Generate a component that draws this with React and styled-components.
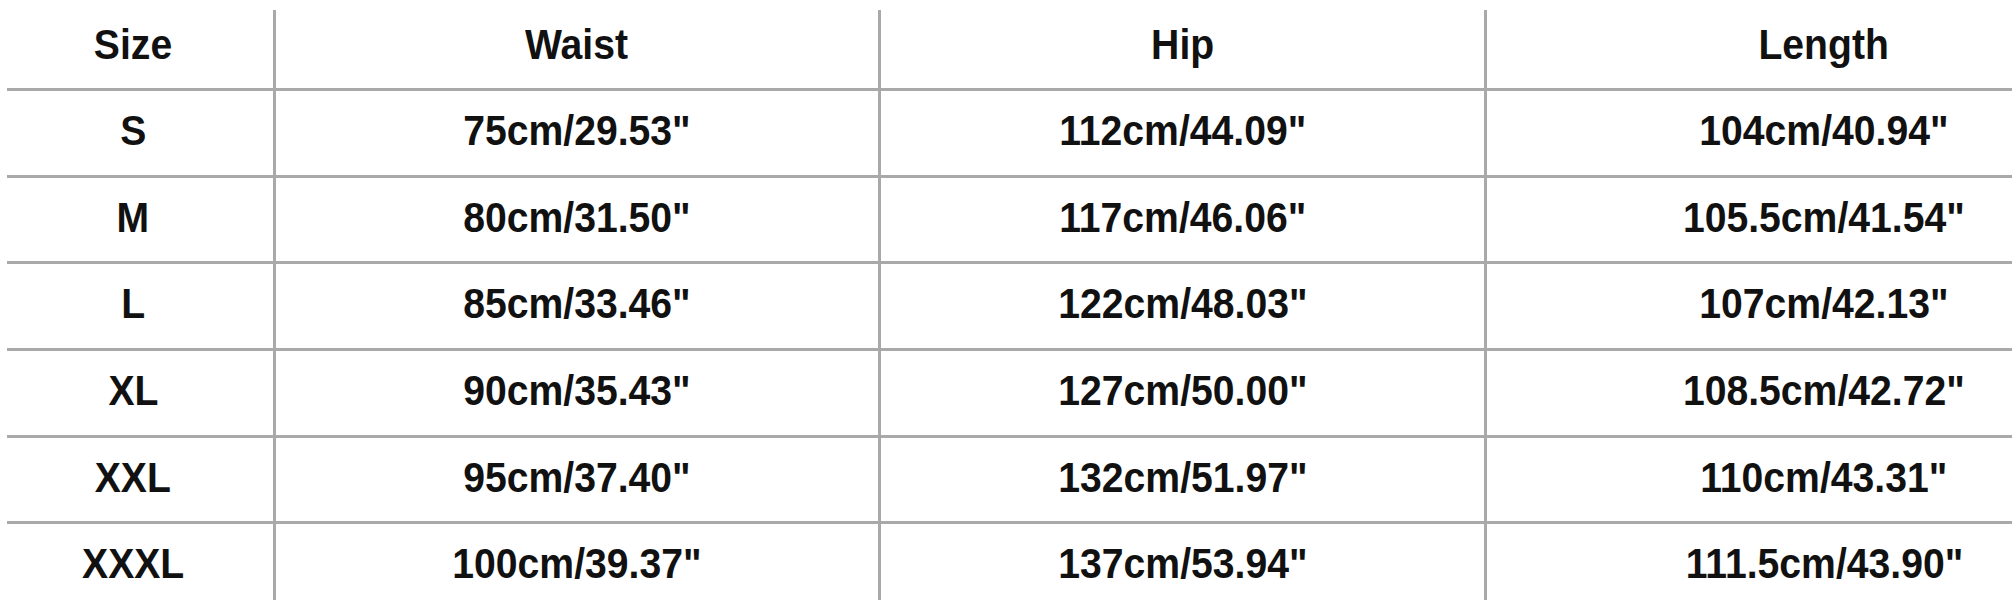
import React from 'react'
import styled, { createGlobalStyle } from 'styled-components'

const GlobalStyle = createGlobalStyle`
  html, body {
    margin: 0;
    padding: 0;
    background: #ffffff;
    overflow: hidden;
  }
  body {
    font-family: "Liberation Sans", Arial, sans-serif;
  }
`

const Page = styled.div`
  width: 2012px;
  height: 600px;
  overflow: hidden;
  padding: 10px 0 0 7px;
  box-sizing: border-box;
`

const Table = styled.div`
  display: grid;
  grid-template-columns: 269px 605px 606px 674px;
  grid-auto-rows: 86.7px;
  grid-template-rows: 81px;
  width: max-content;
`

const Cell = styled.div`
  display: flex;
  align-items: center;
  justify-content: center;
  box-sizing: border-box;
  border-bottom: 3px solid #a9a9a9;
  border-right: ${p => (p.$last ? 'none' : '3px solid #a9a9a9')};
  padding-right: ${p => (p.$first ? '14px' : '0')};
  padding-bottom: ${p => (p.$head ? '10px' : '5px')};
`

const Label = styled.span`
  display: inline-block;
  font-size: 43px;
  line-height: 1;
  font-weight: 700;
  color: #111111;
  white-space: nowrap;
  transform: scaleX(0.91);
`

const headers = ['Size', 'Waist', 'Hip', 'Length']

const rows = [
  ['S', '75cm/29.53"', '112cm/44.09"', '104cm/40.94"'],
  ['M', '80cm/31.50"', '117cm/46.06"', '105.5cm/41.54"'],
  ['L', '85cm/33.46"', '122cm/48.03"', '107cm/42.13"'],
  ['XL', '90cm/35.43"', '127cm/50.00"', '108.5cm/42.72"'],
  ['XXL', '95cm/37.40"', '132cm/51.97"', '110cm/43.31"'],
  ['XXXL', '100cm/39.37"', '137cm/53.94"', '111.5cm/43.90"'],
]

const App = () => {
  return (
    <Page>
      <GlobalStyle />
      <Table>
        {headers.map((h, i) => (
          <Cell key={h} $head $first={i === 0} $last={i === headers.length - 1}>
            <Label>{h}</Label>
          </Cell>
        ))}
        {rows.map(row =>
          row.map((v, i) => (
            <Cell key={row[0] + i} $first={i === 0} $last={i === row.length - 1}>
              <Label>{v}</Label>
            </Cell>
          ))
        )}
      </Table>
    </Page>
  )
}

export default App
